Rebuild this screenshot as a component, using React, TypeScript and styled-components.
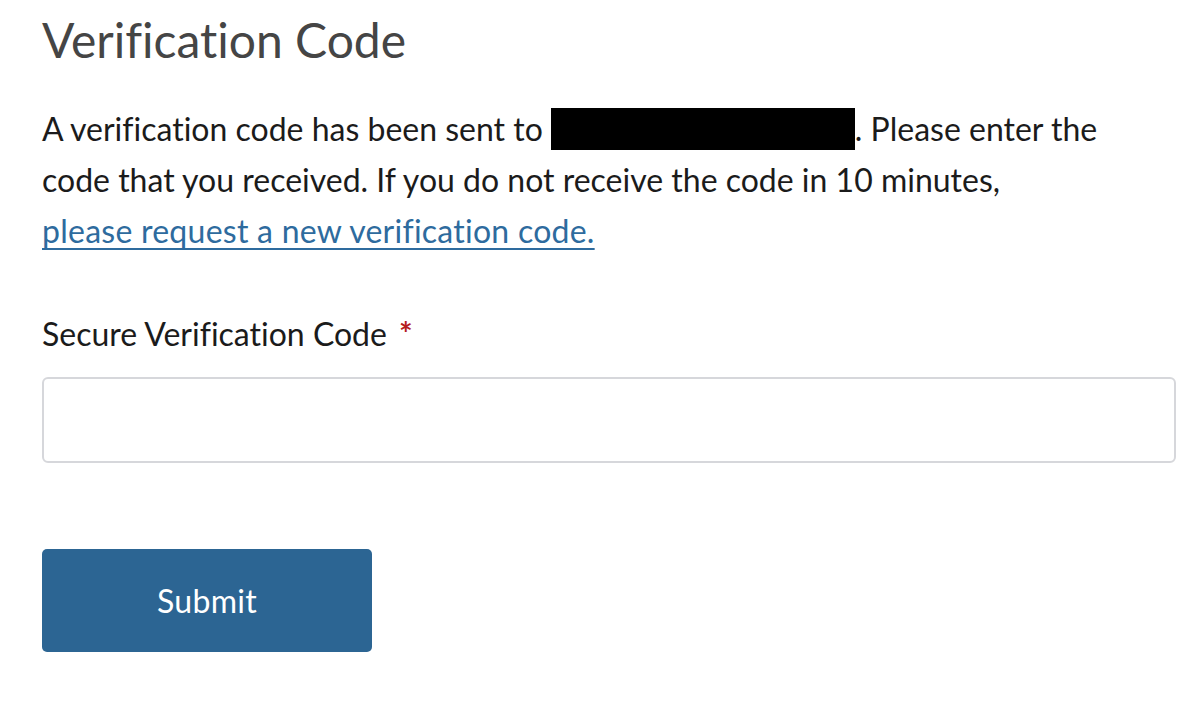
import React, { useState } from "react";
import styled, { createGlobalStyle } from "styled-components";

const GlobalStyle = createGlobalStyle`
  html, body {
    margin: 0;
    padding: 0;
    background: #ffffff;
  }
  body {
    font-family: Lato, "Liberation Sans", sans-serif;
    font-variant-ligatures: none;
    color: #1b1b1b;
  }
`;

const Page = styled.main`
  width: 1134px;
  padding: 12px 8px 0 42px;
`;

const Title = styled.h1`
  margin: 0;
  font-size: 48px;
  line-height: 56px;
  font-weight: 400;
  color: #454545;
`;

const Intro = styled.p`
  margin: 35px 0 0;
  font-size: 32px;
  line-height: 51px;
  color: #1b1b1b;
`;

const Redacted = styled.span`
  display: inline-block;
  width: 304px;
  height: 42px;
  background: #000000;
  vertical-align: -9px;
  margin-left: 8px;
`;

const Link = styled.a`
  color: #2e6b9e;
  letter-spacing: 0.25px;
  text-decoration: underline;
  text-decoration-thickness: 2px;
  text-underline-offset: 5px;
  cursor: pointer;
`;

const Field = styled.div`
  margin-top: 58px;
  display: flex;
  flex-direction: column;
`;

const Label = styled.label`
  font-size: 32px;
  line-height: 40px;
  color: #1b1b1b;
`;

const Required = styled.span`
  color: #b51d1d;
  margin-left: 12px;
  font-weight: 700;
`;

const Input = styled.input`
  margin-top: 23px;
  box-sizing: border-box;
  width: 1134px;
  height: 86px;
  border: 2px solid #d6d7db;
  border-radius: 6px;
  padding: 0 20px;
  font-family: inherit;
  font-size: 32px;
  outline: none;
`;

const SubmitButton = styled.button`
  margin-top: 86px;
  width: 330px;
  height: 103px;
  border: none;
  border-radius: 5px;
  background: #2c6593;
  color: #ffffff;
  font-family: inherit;
  font-size: 32px;
  letter-spacing: 0.3px;
  cursor: pointer;
`;

export default function App() {
  const [code, setCode] = useState("");

  return (
    <>
      <GlobalStyle />
      <Page>
        <Title>Verification Code</Title>
        <Intro>
          A verification code has been sent to
          <Redacted />. Please enter the
          <br />
          code that you received. If you do not receive the code in 10 minutes,
          <br />
          <Link>please request a new verification code.</Link>
        </Intro>
        <Field>
          <Label htmlFor="code">
            Secure Verification Code<Required>*</Required>
          </Label>
          <Input
            id="code"
            type="text"
            value={code}
            onChange={(e) => setCode(e.target.value)}
          />
        </Field>
        <SubmitButton type="button">Submit</SubmitButton>
      </Page>
    </>
  );
}
